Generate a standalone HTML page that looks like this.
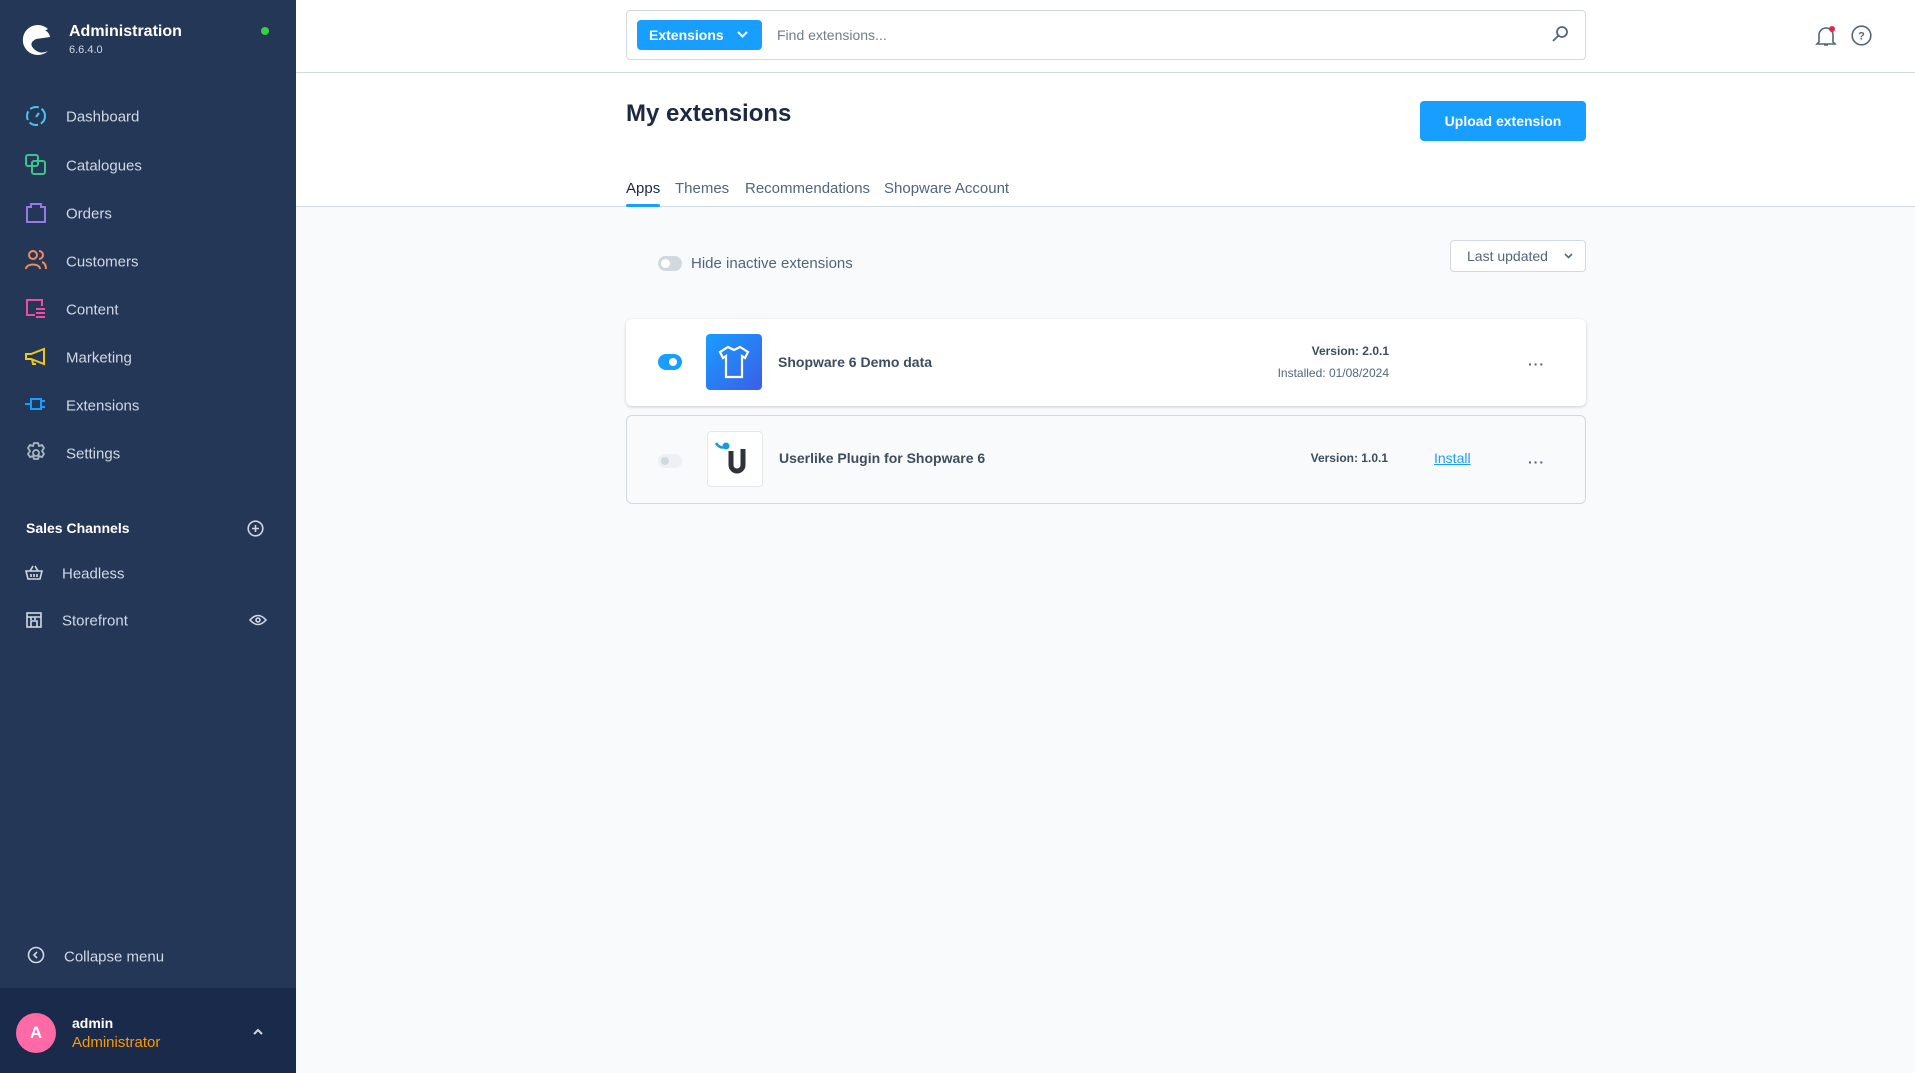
<!DOCTYPE html>
<html><head><meta charset="utf-8"><style>
*{box-sizing:border-box;margin:0;padding:0}
body{width:1915px;height:1073px;overflow:hidden;font-family:"Liberation Sans",sans-serif;background:#f9fafb;position:relative;color:#52667a}
.abs{position:absolute}
#sb{left:0;top:0;width:296px;height:1073px;background:#243757}
.nav{position:absolute;left:66px;font-size:15px;color:#d0d8e3;transform:translateY(-50%)}
.ic{position:absolute;left:25px;width:22px;height:22px;transform:translateY(-50%)}
#main{left:296px;top:0;width:1619px;height:207px;background:#fff;border-bottom:1px solid #d1d9e0}
.tab{position:absolute;top:180px;font-size:15px;color:#52667a}
.card{position:absolute;left:626px;width:960px;border-radius:6px}
.dots{position:absolute;font-size:14px;color:#52667a;letter-spacing:1px;font-weight:bold}
</style></head><body>
<div id="sb" class="abs">
 <svg class="abs" style="left:18px;top:21px" width="36" height="36" viewBox="0 0 36 36"><path d="M30 8 A15 15 0 1 0 30 30 Q22 34 16 28 Q10 22 18 18 L32 16 Q31 10 24 8 Q18 9 18 14" fill="#fff"/></svg>
 <div class="abs" style="left:69px;top:23px;color:#fff;font-weight:bold;font-size:16px">Administration</div>
 <div class="abs" style="left:69px;top:44px;color:#d0d8e3;font-size:11px">6.6.4.0</div>
 <div class="abs" style="left:261px;top:27px;width:8px;height:8px;border-radius:50%;background:#37d046"></div>
 <svg class="ic" style="top:116px" viewBox="0 0 22 22" fill="none" stroke="#4fc2ec" stroke-width="2"><circle cx="11" cy="11" r="9" stroke-dasharray="9 3"/><path d="M11 12l3-4"/></svg>
 <div class="nav" style="top:117px">Dashboard</div>
 <svg class="ic" style="top:165px" viewBox="0 0 22 22" fill="none" stroke="#3cc48b" stroke-width="2"><rect x="1" y="1" width="12" height="11" rx="2"/><rect x="7" y="7" width="13" height="13" rx="2"/></svg>
 <div class="nav" style="top:166px">Catalogues</div>
 <svg class="ic" style="top:213px" viewBox="0 0 22 22" fill="none" stroke="#9579e8" stroke-width="2"><path d="M2 5h4V2h10v3h4v15H2z"/></svg>
 <div class="nav" style="top:214px">Orders</div>
 <svg class="ic" style="top:260px" viewBox="0 0 22 22" fill="none" stroke="#f58a5a" stroke-width="2"><circle cx="8" cy="6" r="4"/><path d="M1 20c0-6 14-6 14 0M14 2a4 4 0 010 8M17 13c3 1 4 4 4 7"/></svg>
 <div class="nav" style="top:262px">Customers</div>
 <svg class="ic" style="top:309px" viewBox="0 0 22 22" fill="none" stroke="#ec4fa1" stroke-width="2"><path d="M10 17H2V2h15v6M11 11h9M11 15h9M11 19h9"/></svg>
 <div class="nav" style="top:310px">Content</div>
 <svg class="ic" style="top:357px" viewBox="0 0 22 22" fill="none" stroke="#f0c619" stroke-width="2"><path d="M1 8h5l13-5v15L6 13H1zM7 13l1 5h3"/></svg>
 <div class="nav" style="top:358px">Marketing</div>
 <svg class="ic" style="top:404px" viewBox="0 0 22 22" fill="none" stroke="#189eff" stroke-width="2"><path d="M0 11h5M6 6h10v10H6zM16 8h4M16 14h4"/></svg>
 <div class="nav" style="top:406px">Extensions</div>
 <svg class="ic" style="top:453px" viewBox="0 0 22 22" fill="none" stroke="#a8b5c4" stroke-width="1.8"><circle cx="11" cy="11" r="3"/><path d="M9 1h4l1 3 3-1 2 3-2 3 2 3-2 3-3-1-1 3H9l-1-3-3 1-2-3 2-3-2-3 2-3 3 1z"/></svg>
 <div class="nav" style="top:454px">Settings</div>
 <div class="abs" style="left:26px;top:520px;color:#fff;font-weight:bold;font-size:14px">Sales Channels</div>
 <svg class="abs" style="left:247px;top:520px" width="17" height="17" viewBox="0 0 17 17" fill="none" stroke="#d0d8e3" stroke-width="1.6"><circle cx="8.5" cy="8.5" r="7.3"/><path d="M8.5 5v7M5 8.5h7"/></svg>
 <svg class="ic" style="top:573px;width:18px" viewBox="0 0 18 18" fill="none" stroke="#d0d8e3" stroke-width="1.6"><path d="M1 7h16l-2 8H3zM5 7l3-5M13 7l-3-5M6 10v3M9 10v3M12 10v3"/></svg>
 <div class="nav" style="top:574px;left:62px">Headless</div>
 <svg class="ic" style="top:620px;width:18px" viewBox="0 0 18 18" fill="none" stroke="#d0d8e3" stroke-width="1.6"><rect x="2" y="2" width="14" height="14"/><path d="M2 6h14M6 16v-6h6v6M6 6v3M10 6v3"/></svg>
 <div class="nav" style="top:621px;left:62px">Storefront</div>
 <svg class="abs" style="left:249px;top:614px" width="18" height="12" viewBox="0 0 18 12" fill="none" stroke="#d0d8e3" stroke-width="1.6"><path d="M1 6q8-9 16 0q-8 9-16 0z"/><circle cx="9" cy="6" r="2"/></svg>
 <svg class="abs" style="left:27px;top:946px" width="18" height="18" viewBox="0 0 18 18" fill="none" stroke="#d0d8e3" stroke-width="1.6"><circle cx="9" cy="9" r="7.5"/><path d="M10 6l-3 3 3 3"/></svg>
 <div class="nav" style="top:957px;left:64px">Collapse menu</div>
 <div class="abs" style="left:0;top:988px;width:296px;height:85px;background:#1a2a4a">
  <div class="abs" style="left:16px;top:25px;width:40px;height:40px;border-radius:50%;background:#ff6aa6;color:#fff;font-size:17px;font-weight:bold;text-align:center;line-height:40px">A</div>
  <div class="abs" style="left:72px;top:27px;color:#fff;font-weight:bold;font-size:14px">admin</div>
  <div class="abs" style="left:72px;top:46px;color:#ff9900;font-size:15px">Administrator</div>
  <svg class="abs" style="left:252px;top:40px" width="12" height="8" viewBox="0 0 12 8" fill="none" stroke="#d0d8e3" stroke-width="2"><path d="M2 6l4-4 4 4"/></svg>
 </div>
</div>
<div id="main" class="abs"></div>
<div class="abs" style="left:296px;top:72px;width:1619px;height:1px;background:#d1d9e0"></div>
<div class="abs" style="left:626px;top:10px;width:960px;height:50px;border:1px solid #d1d9e0;border-radius:4px;background:#fff">
 <div class="abs" style="left:10px;top:9px;width:125px;height:30px;background:#189eff;border-radius:4px;color:#fff;font-weight:bold;font-size:14px;line-height:30px;padding-left:12px">Extensions<svg class="abs" style="left:100px;top:11px" width="11" height="8" viewBox="0 0 11 8" fill="none" stroke="#fff" stroke-width="2"><path d="M1 1l4.5 4.5L10 1"/></svg></div>
 <div class="abs" style="left:150px;top:16px;font-size:14px;color:#6f7d8c">Find extensions...</div>
 <svg class="abs" style="left:924px;top:14px" width="18" height="18" viewBox="0 0 18 18" fill="none" stroke="#52667a" stroke-width="1.8"><circle cx="11" cy="7" r="5"/><path d="M7.5 10.5L2 16"/></svg>
</div>
<svg class="abs" style="left:1814px;top:24px" width="24" height="24" viewBox="0 0 24 24" fill="none" stroke="#52667a" stroke-width="1.6"><path d="M5 18V11a7 7 0 0114 0v7l2 2H3zM10 21h4"/><circle cx="18" cy="5" r="3" fill="#de294c" stroke="none"/></svg>
<svg class="abs" style="left:1851px;top:25px" width="21" height="21" viewBox="0 0 21 21" fill="none" stroke="#52667a" stroke-width="1.6"><circle cx="10.5" cy="10.5" r="9.3"/><text x="10.5" y="14.5" font-size="11" font-family="Liberation Sans" font-weight="bold" text-anchor="middle" fill="#52667a" stroke="none">?</text></svg>
<div class="abs" style="left:626px;top:100px;font-size:24px;font-weight:bold;color:#1b2a41">My extensions</div>
<div class="abs" style="left:1420px;top:101px;width:166px;height:40px;background:#189eff;border-radius:4px;color:#fff;font-weight:bold;font-size:14px;text-align:center;line-height:40px">Upload extension</div>
<div class="tab" style="left:626px;color:#1b2a41">Apps</div>
<div class="abs" style="left:626px;top:204px;width:34px;height:3px;background:#189eff;border-radius:2px"></div>
<div class="tab" style="left:675px">Themes</div>
<div class="tab" style="left:745px">Recommendations</div>
<div class="tab" style="left:884px">Shopware Account</div>
<div class="abs" style="left:658px;top:256px;width:24px;height:15px;border-radius:8px;background:#d1d9e0"><div class="abs" style="left:3px;top:3px;width:9px;height:9px;border-radius:50%;background:#fff"></div></div>
<div class="abs" style="left:691px;top:255px;font-size:15px">Hide inactive extensions</div>
<div class="abs" style="left:1450px;top:240px;width:136px;height:32px;border:1px solid #d1d9e0;border-radius:4px;background:#fff;font-size:14px;line-height:30px;padding-left:16px">Last updated<svg class="abs" style="left:113px;top:12px" width="9" height="7" viewBox="0 0 9 7" fill="none" stroke="#52667a" stroke-width="1.6"><path d="M1 1l3.5 3.5L8 1"/></svg></div>
<div class="card" style="top:319px;height:87px;background:#fff;box-shadow:0 1px 3px rgba(0,0,0,.18)">
 <div class="abs" style="left:32px;top:35px;width:24px;height:16px;border-radius:8px;background:#189eff"><div class="abs" style="left:11px;top:4px;width:8px;height:8px;border-radius:50%;background:#fff"></div></div>
 <div class="abs" style="left:80px;top:15px;width:56px;height:56px;border-radius:4px;background:linear-gradient(135deg,#189eff,#3b5ee8)"><svg class="abs" style="left:12px;top:11px" width="32" height="34" viewBox="0 0 32 34" fill="none" stroke="#fff" stroke-width="2.2"><path d="M10 2l6 3 6-3 8 5-3 6-3-2v21H8V11l-3 2-3-6z"/></svg></div>
 <div class="abs" style="left:152px;top:35px;font-size:14px;font-weight:bold;color:#3d4d5f">Shopware 6 Demo data</div>
 <div class="abs" style="right:197px;top:25px;font-size:12px;font-weight:bold;color:#3d4d5f">Version: 2.0.1</div>
 <div class="abs" style="right:197px;top:47px;font-size:12px">Installed: 01/08/2024</div>
 <div class="dots" style="left:902px;top:37px">···</div>
</div>
<div class="card" style="top:415px;height:89px;background:#f9fafb;border:1px solid #d1d9e0">
 <div class="abs" style="left:31px;top:38px;width:24px;height:14px;border-radius:7px;background:#eef1f4"><div class="abs" style="left:3px;top:3px;width:8px;height:8px;border-radius:50%;background:#d1d9e0"></div></div>
 <div class="abs" style="left:80px;top:15px;width:56px;height:56px;border-radius:4px;background:#fff;border:1px solid #e5e9ee"><svg class="abs" style="left:6px;top:7px" width="40" height="40" viewBox="0 0 40 40"><path d="M17 12v14a6 6 0 0012 0V10" fill="none" stroke="#2f3338" stroke-width="5"/><path d="M2 4q4 6 9 4" fill="none" stroke="#1a9bd7" stroke-width="2.5"/><circle cx="12" cy="7" r="3.5" fill="#1a9bd7"/></svg></div>
 <div class="abs" style="left:152px;top:34px;font-size:14px;font-weight:bold;color:#3d4d5f">Userlike Plugin for Shopware 6</div>
 <div class="abs" style="right:197px;top:35px;font-size:12px;font-weight:bold;color:#3d4d5f">Version: 1.0.1</div>
 <div class="abs" style="left:807px;top:34px;font-size:14px;color:#189eff;text-decoration:underline">Install</div>
 <div class="dots" style="left:901px;top:38px">···</div>
</div>
</body></html>
